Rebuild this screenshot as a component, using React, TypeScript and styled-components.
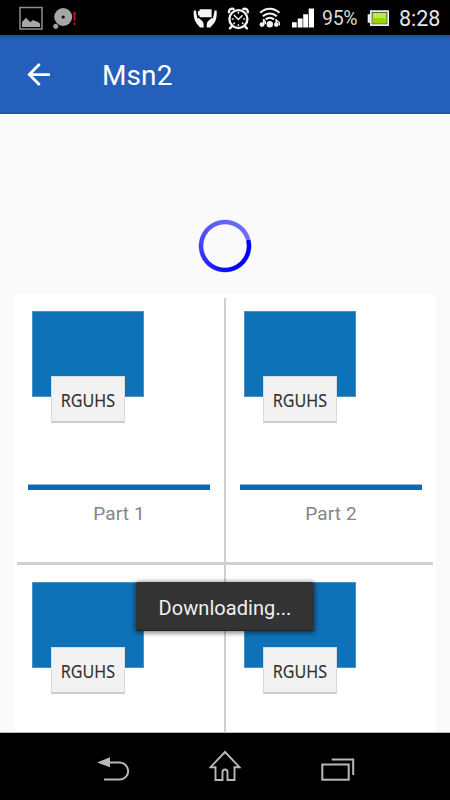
import React from 'react';
import styled, { createGlobalStyle } from 'styled-components';

const GlobalStyle = createGlobalStyle`
  * { box-sizing: border-box; }
  body { margin: 0; background: #fafafa; font-family: Roboto, sans-serif; }
  svg { display: block; flex: none; }
`;

const Screen = styled.div`
  position: relative;
  display: flex;
  flex-direction: column;
  width: 450px;
  height: 800px;
  overflow: hidden;
  background: #fafafa;
`;

const StatusBar = styled.header`
  display: flex;
  align-items: center;
  height: 35px;
  flex: none;
  padding: 0 8px 0 19px;
  background: #000;
  color: #d8d8d8;
`;

const StatusGroup = styled.div<{ $gap: number }>`
  display: flex;
  align-items: center;
  height: 35px;
  gap: ${(p) => p.$gap}px;
`;

const Spacer = styled.div`
  flex: 1;
`;

const Percent = styled.span`
  width: 38px;
  margin: 3px 7px 0 8px;
  font-size: 19.5px;
  line-height: 24px;
  letter-spacing: -0.3px;
`;

const Clock = styled.span`
  width: 43px;
  margin: 3px 0 0 9px;
  font-size: 21.5px;
  line-height: 26px;
  color: #e6e6e6;
`;

const AppBar = styled.div`
  display: flex;
  align-items: center;
  height: 79px;
  flex: none;
  padding: 1px 0 0 26px;
  background: linear-gradient(#1c4f9c 0, #235bb0 3px, #2460bb 9px, #2460bb 76px, #1f55aa 79px);
`;

const Title = styled.h1`
  margin: 2px 0 0 51px;
  color: #fff;
  font-size: 28px;
  line-height: 34px;
  font-weight: 400;
  letter-spacing: 0.1px;
`;

const Content = styled.main`
  height: 619px;
  flex: none;
  overflow: hidden;
  border-bottom: 1px solid #b9b9b9;
`;

const LoadingArea = styled.div`
  display: flex;
  justify-content: center;
  height: 180px;
  padding-top: 105px;
`;

const Spinner = styled.div`
  width: 54px;
  height: 54px;
  border-radius: 50%;
  background: conic-gradient(
    from 76deg,
    #0000ff 0deg,
    #0000ff 75deg,
    #1414fc 120deg,
    #3f3ffb 190deg,
    #5a5afa 250deg,
    #7272fa 360deg
  );
  mask: radial-gradient(circle, transparent 21.2px, #000 22.2px, #000 25.6px, transparent 26.8px);
`;

const Board = styled.section`
  display: grid;
  grid-template-columns: 210px 2px 210px;
  grid-template-rows: 268px 3px 271px;
  width: 422px;
  margin: 0 auto;
  border-radius: 3px 3px 0 0;
  background: #fff;
`;

const ColumnRule = styled.div`
  grid-area: 1 / 2 / 4 / 3;
  margin-top: 4px;
  background: #d0d0d0;
`;

const RowRule = styled.div`
  grid-area: 2 / 1 / 3 / 4;
  margin: 0 3px;
  background: #d0d0d0;
`;

const Tile = styled.article<{ $row: number; $col: number }>`
  grid-area: ${(p) => p.$row} / ${(p) => p.$col};
  padding: 17px 14px 0;
`;

const Cover = styled.div`
  display: grid;
  grid-template-columns: 19px 74px 19px;
  grid-template-rows: 65px 21px 26px;
  width: 112px;
  margin-left: 4px;
`;

const CoverPanel = styled.div`
  grid-area: 1 / 1 / 3 / 4;
  background: #0d72b8;
  border: 1px solid #4a92c4;
`;

const CoverLabel = styled.div`
  display: flex;
  align-items: center;
  justify-content: center;
  grid-area: 2 / 2 / 4 / 3;
  background: #f2f2f2;
  border: 1px solid #dadada;
  border-bottom: 2px solid #cdcdcd;
  color: #303030;
  font-family: 'Noto Sans', sans-serif;
  font-size: 17.5px;
  line-height: 20px;

  span {
    transform: translate(-0.5px, 0.5px) scaleX(0.92);
    -webkit-text-stroke: 0.1px #303030;
  }
`;

const Accent = styled.div`
  width: 182px;
  height: 6px;
  margin-top: 61px;
  border-top: 1px solid #8db9c9;
  background: #0869bc;
`;

const Caption = styled.p`
  margin: 12px 0 0;
  text-align: center;
  color: #858585;
  font-size: 19px;
  line-height: 24px;
  font-weight: 400;
  letter-spacing: 0.1px;
`;

const Toast = styled.div`
  position: absolute;
  left: 136px;
  top: 582px;
  display: flex;
  align-items: center;
  justify-content: center;
  width: 178px;
  height: 49px;
  padding: 3px 0 0;
  border-radius: 2px;
  background: #333;
  border-bottom: 1px solid #202020;
  box-shadow: 0 1px 5px 1px rgba(0, 0, 0, 0.5);
  color: #f0f0f0;
  font-size: 20px;
  line-height: 24px;
  letter-spacing: 0.06px;
`;

const NavBar = styled.nav`
  display: flex;
  align-items: flex-start;
  gap: 78px;
  height: 67px;
  flex: none;
  padding: 15px 0 0 95px;
  background: #000;
`;

const PictureIcon = () => (
  <svg width="24" height="24" viewBox="0 0 24 24">
    <rect x="1" y="1.5" width="22" height="21.5" fill="none" stroke="#8e8e8e" strokeWidth="1.5" />
    <path d="M3 21V16l2-2 2-2.2 2 2.2 2.5 2 2.5-2 2 1 2 .5 3 2V21Z" fill="#a6a6a6" />
  </svg>
);

const DiscIcon = () => (
  <svg width="24" height="24" viewBox="0 0 24 24">
    <circle cx="10.2" cy="11" r="9" fill="#a6a6a6" />
    <circle cx="10.2" cy="11" r="1.6" fill="#000" />
    <circle cx="2.7" cy="20.3" r="2.9" fill="#a6a6a6" stroke="#000" strokeWidth=".7" />
    <path d="M20.2 5.7h2.8l-.5 9.3h-1.8ZM20.3 16.6h2.4v2.4h-2.4Z" fill="#b00c0c" />
  </svg>
);

const StaminaIcon = () => (
  <svg width="24" height="24" viewBox="0 0 24 24" fill="#f5f5f5">
    <path d="M6.6 3.2h12v8h-12V9.4H5V5h1.6Z" />
    <path d="M.8 4.6h2.1c.5 3 .9 5.6 1.6 7.8l1-.3c1.8 1.4 4.3 2.9 4.9 5 .4 1.6.3 3 .3 4.5H6.8c-.4-1.4-1.8-2.4-3.2-4.1C1 14.3.3 9.4.8 4.6Z" />
    <path d="M23.6 4.6h-2.1c-.5 3-.9 5.6-1.6 7.8l-1-.3c-1.8 1.4-4.3 2.9-4.9 5-.4 1.6-.3 3-.3 4.5h3.9c.4-1.4 1.8-2.4 3.2-4.1 2.6-3.2 3.3-8.1 2.8-12.9Z" />
  </svg>
);

const AlarmIcon = () => (
  <svg width="24" height="24" viewBox="0 0 24 24" fill="none" stroke="#f2f2f2" strokeLinecap="round">
    <circle cx="12.4" cy="13.1" r="9" strokeWidth="2.4" />
    <path d="M2.9 6.2C2.8 3.7 5 2.2 7.4 2.9M21.9 6.2c.1-2.5-2.1-4-4.5-3.3M5.4 20.8l-1.5 1.5M19.4 20.8l1.5 1.5" strokeWidth="2.4" />
    <path d="M8.4 9.4l4 4.1 3.7-3.7M12.4 6.5v.8M12.4 18.7v.8M6.3 13h.8M17.7 13h.8M7.9 17.5l.5-.5M16.9 17.5l-.5-.5" strokeWidth="1.5" />
  </svg>
);

const WifiMediaIcon = () => (
  <svg width="24" height="24" viewBox="0 0 24 24" fill="none" stroke="#f2f2f2">
    <path d="M1.2 6.8c5.8-5.4 13.4-5.4 19.2 0M3.8 10.3c4-3.8 10-3.8 14 0M6.6 13.4c2.4-2.1 6-2.1 8.4 0" strokeWidth="2.1" />
    <circle cx="10.8" cy="18.3" r="3.2" fill="#f2f2f2" stroke="none" />
    <path d="M4.7 13v6M17.2 13v6" strokeWidth="1.6" />
    <ellipse cx="3" cy="18.6" rx="2.4" ry="2.3" fill="#f2f2f2" stroke="none" />
    <ellipse cx="17.2" cy="18.6" rx="2.2" ry="2.3" fill="#f2f2f2" stroke="none" />
    <path d="M4.7 14l1.6 2v2M17.2 14l3 2.5v3" strokeWidth="1.5" />
  </svg>
);

const SignalIcon = () => (
  <svg width="22" height="24" viewBox="0 0 22 24" fill="#fff">
    <path d="M0 16.3h4.7v5.1H0ZM5.7 12.5h4.9v8.9H5.7ZM11.2 8.3H16v13.1h-4.8ZM16.7 2.5h5.3v18.9h-5.3Z" />
  </svg>
);

const BatteryIcon = () => (
  <svg width="23" height="18" viewBox="0 0 23 18">
    <path d="M3 1.2h19V17H3v-3.2H.7V5.2H3Z" fill="#eee" />
    <path d="M4.7 3h15.6v12.2H4.7Z" fill="#463d50" />
    <path d="M5.5 3.8h14v10.6H5.5Z" fill="#b5e53c" />
    <path d="M5.5 9h14v5.4H5.5Z" fill="#94d800" />
    <path d="M8.5 4v5M11.3 4v5M14.1 4v5M16.9 4v5" stroke="#d2f578" strokeWidth=".8" />
  </svg>
);

const BackArrow = () => (
  <svg width="25" height="26" viewBox="0 0 25 26" fill="none" stroke="#fff" strokeWidth="2.8">
    <path d="M24 12.6H3.5M13.7 2.1L3.3 12.6l10.4 10.5" />
  </svg>
);

const NavBack = () => (
  <svg width="36" height="36" viewBox="0 0 36 36">
    <path d="M2 14.5L15 9.3v10Z" fill="#b8b8b8" />
    <path d="M14 14.5h11c4 0 8.2 3.6 8.2 8.5 0 5-4.2 8.5-8.2 8.5H9" fill="none" stroke="#b8b8b8" strokeWidth="2" />
  </svg>
);

const NavHome = () => (
  <svg width="32" height="36" viewBox="0 0 32 36" fill="none" stroke="#b8b8b8" strokeWidth="1.9">
    <path d="M16 4L1.5 19.2h5V32h7v-8c0-3.4 5-3.4 5 0v8h7V19.2h5Z" />
  </svg>
);

const NavRecents = () => (
  <svg width="36" height="36" viewBox="0 0 36 36" fill="none" stroke="#b8b8b8" strokeWidth="2">
    <rect x="3.3" y="16.5" width="26.4" height="15.2" />
    <path d="M12.7 11.5h21.5V27" />
  </svg>
);

const tiles = [
  { row: 1, col: 1, name: 'Part 1' },
  { row: 1, col: 3, name: 'Part 2' },
  { row: 3, col: 1, name: '' },
  { row: 3, col: 3, name: '' },
];

export default function App() {
  return (
    <>
      <GlobalStyle />
      <Screen>
        <StatusBar>
          <StatusGroup $gap={10}>
            <PictureIcon />
            <DiscIcon />
          </StatusGroup>
          <Spacer />
          <StatusGroup $gap={9}>
            <StaminaIcon />
            <AlarmIcon />
            <WifiMediaIcon />
            <SignalIcon />
          </StatusGroup>
          <Percent>95%</Percent>
          <BatteryIcon />
          <Clock>8:28</Clock>
        </StatusBar>
        <AppBar>
          <BackArrow />
          <Title>Msn2</Title>
        </AppBar>
        <Content>
          <LoadingArea>
            <Spinner />
          </LoadingArea>
          <Board>
            <ColumnRule />
            <RowRule />
            {tiles.map((tile) => (
              <Tile key={`${tile.row}-${tile.col}`} $row={tile.row} $col={tile.col}>
                <Cover>
                  <CoverPanel />
                  <CoverLabel>
                    <span>RGUHS</span>
                  </CoverLabel>
                </Cover>
                <Accent />
                <Caption>{tile.name}</Caption>
              </Tile>
            ))}
          </Board>
        </Content>
        <NavBar>
          <NavBack />
          <NavHome />
          <NavRecents />
        </NavBar>
        <Toast>Downloading...</Toast>
      </Screen>
    </>
  );
}
